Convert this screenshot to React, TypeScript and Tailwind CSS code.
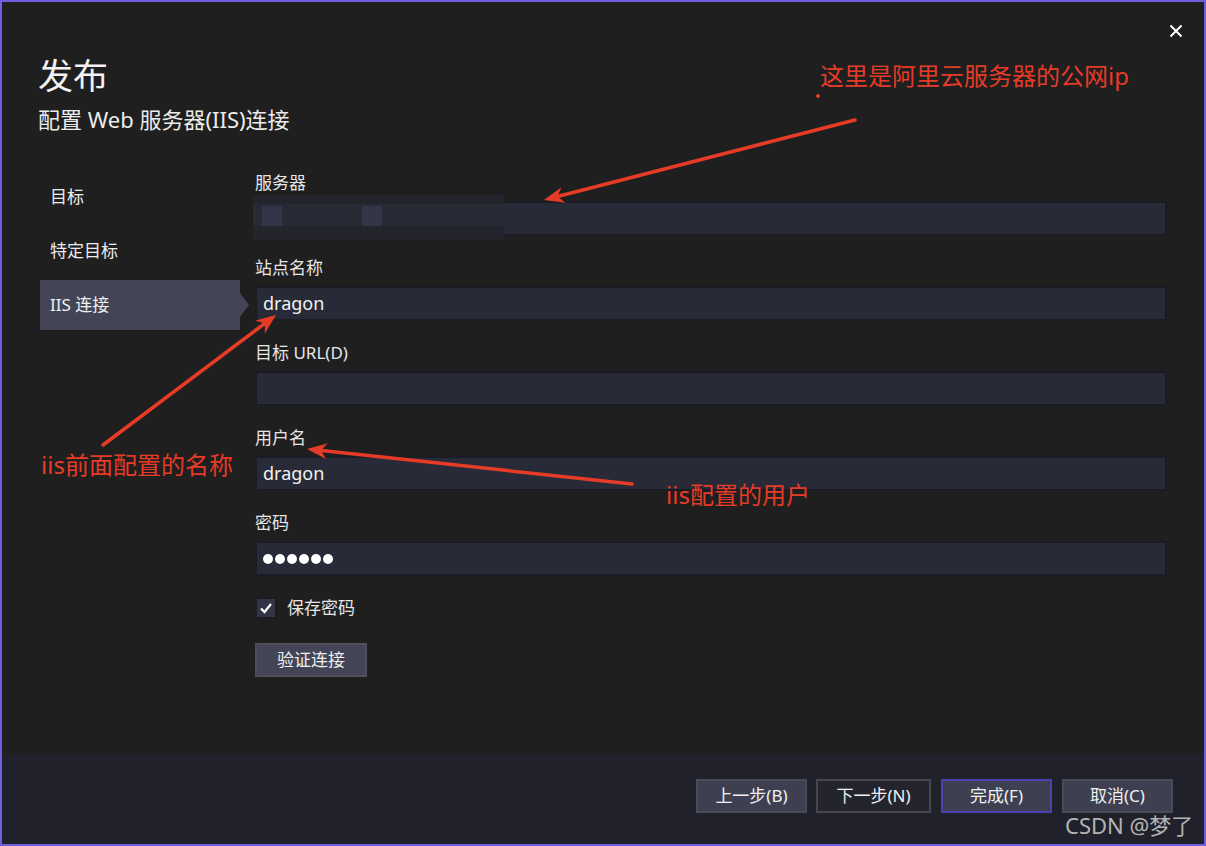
import React from "react";

const FONT = { fontFamily: '"Noto Sans", "Noto Sans CJK SC", sans-serif' };

function Arrow({ x1, y1, x2, y2 }: { x1: number; y1: number; x2: number; y2: number }) {
  const dx = x2 - x1;
  const dy = y2 - y1;
  const len = Math.hypot(dx, dy);
  const ux = dx / len;
  const uy = dy / len;
  const hl = 20;
  const hw = 8;
  const bx = x2 - ux * hl;
  const by = y2 - uy * hl;
  const px = -uy;
  const py = ux;
  const pts = `${x2},${y2} ${bx + px * hw},${by + py * hw} ${x2 - ux * hl * 0.7},${y2 - uy * hl * 0.7} ${bx - px * hw},${by - py * hw}`;
  return (
    <g>
      <line x1={x1} y1={y1} x2={x2 - ux * 10} y2={y2 - uy * 10} stroke="#e63b27" strokeWidth={3.5} strokeLinecap="round" />
      <polygon points={pts} fill="#e63b27" />
    </g>
  );
}

function Field({ label, value, children }: { label: string; value?: string; children?: React.ReactNode }) {
  return (
    <div className="flex flex-col">
      <div className="h-[24px] leading-[24px] text-[17px] text-[#e6e6e6]">{label}</div>
      <div className="relative mt-[6px] h-[35px] border-2 border-[#1b1c23] bg-[#282a37] flex items-center px-[6px] text-[18px] text-[#f2f2f2]">
        {value}
        {children}
      </div>
    </div>
  );
}

export default function App() {
  return (
    <div className="relative w-[1206px] h-[846px] overflow-hidden" style={FONT}>
      <div className="w-[1206px] h-[846px] border-2 border-[#6e5fe0] bg-[#1f1f1f] flex flex-col">
        <div className="flex-1 flex flex-col">
          <div className="pl-[36px] pt-[51px]">
            <div className="text-[35px] leading-[46px] text-[#f2f2f2]">发布</div>
            <div className="mt-[5px] text-[22px] leading-[30px] text-[#ececec]">配置 Web 服务器(IIS)连接</div>
          </div>
          <div className="flex mt-[37px] pl-[38px] pr-[37px]">
            <div className="w-[200px] flex flex-col gap-[4px] pt-[1px]">
              <div className="h-[50px] flex items-center pl-[10px] text-[17px] text-[#ececec]">目标</div>
              <div className="h-[50px] flex items-center pl-[10px] text-[17px] text-[#ececec]">特定目标</div>
              <div className="relative h-[50px] flex items-center pl-[10px] text-[17px] text-[#f2f2f2] bg-[#434556]">
                IIS 连接
                <div className="absolute right-[-9px] top-[13px] w-0 h-0 border-y-[12px] border-y-transparent border-l-[9px] border-l-[#434556]"></div>
              </div>
            </div>
            <div className="flex-1 ml-[15px] flex flex-col">
              <div className="flex flex-col gap-[20px]">
                <Field label="服务器">
                  <div className="absolute left-[-4px] top-[-8px] w-[251px] h-[45px] bg-[#24252c]">
                    <div className="absolute left-[0px] top-[9px] w-[251px] h-[22px] bg-[#282a36]"></div>
                    <div className="absolute left-[9px] top-[11px] w-[20px] h-[20px] bg-[#333546]"></div>
                    <div className="absolute left-[109px] top-[11px] w-[20px] h-[20px] bg-[#333546]"></div>
                  </div>
                </Field>
                <Field label="站点名称" value="dragon" />
                <Field label="目标 URL(D)" />
                <Field label="用户名" value="dragon" />
                <Field label="密码">
                  <div className="flex gap-[2px]">
                    <div className="w-[10px] h-[10px] rounded-full bg-white"></div>
                    <div className="w-[10px] h-[10px] rounded-full bg-white"></div>
                    <div className="w-[10px] h-[10px] rounded-full bg-white"></div>
                    <div className="w-[10px] h-[10px] rounded-full bg-white"></div>
                    <div className="w-[10px] h-[10px] rounded-full bg-white"></div>
                    <div className="w-[10px] h-[10px] rounded-full bg-white"></div>
                  </div>
                </Field>
              </div>
              <div className="flex items-center mt-[21px] h-[22px]">
                <div className="w-[22px] h-[22px] border-2 border-[#1b1c23] bg-[#323446] flex items-center justify-center">
                  <svg width="14" height="14" viewBox="0 0 14 14">
                    <path d="M2 7.5 L5.5 11 L12 3" fill="none" stroke="#ffffff" strokeWidth="2.2" />
                  </svg>
                </div>
                <span className="ml-[10px] text-[17px] text-[#e6e6e6]">保存密码</span>
              </div>
              <div className="mt-[24px]">
                <button className="w-[112px] h-[34px] border-2 border-[#4e4f5a] bg-[#434556] text-[17px] text-[#f0f0f0]">验证连接</button>
              </div>
            </div>
          </div>
        </div>
        <div className="h-[90px] bg-[#21212b] flex items-start justify-end pt-[25px] pr-[31px]">
          <button className="w-[111px] h-[34px] border-2 border-[#4a4b54] bg-[#3e4052] text-[17px] text-[#f0f0f0]">上一步(B)</button>
          <button className="w-[115px] h-[34px] border-2 border-[#45464e] bg-[#23242e] text-[17px] text-[#f0f0f0] ml-[9px]">下一步(N)</button>
          <button className="w-[111px] h-[34px] border-2 border-[#4e3fb0] bg-[#3e4052] text-[17px] text-[#f0f0f0] ml-[10px]">完成(F)</button>
          <button className="w-[111px] h-[34px] border-2 border-[#4a4b54] bg-[#3e4052] text-[17px] text-[#f0f0f0] ml-[10px]">取消(C)</button>
        </div>
      </div>

      {/* close button */}
      <div className="absolute left-[1166px] top-[21px] w-[20px] h-[20px] flex items-center justify-center">
        <svg width="14" height="14" viewBox="0 0 14 14">
          <path d="M1.5 1.5 L12.5 12.5 M12.5 1.5 L1.5 12.5" stroke="#ffffff" strokeWidth="2" />
        </svg>
      </div>

      {/* annotations */}
      <svg className="absolute left-0 top-0 pointer-events-none" width="1206" height="846" viewBox="0 0 1206 846">
        <Arrow x1={855} y1={120} x2={544} y2={200} />
        <Arrow x1={103} y1={445} x2={276} y2={315} />
        <Arrow x1={632} y1={484} x2={307} y2={449} />
        <circle cx={818} cy={96} r={2} fill="#e63b27" />
      </svg>
      <div className="absolute left-[820px] top-[60px] text-[24px] leading-[32px] text-[#e63b27] whitespace-nowrap">这里是阿里云服务器的公网ip</div>
      <div className="absolute left-[41px] top-[449px] text-[24px] leading-[32px] text-[#e63b27] whitespace-nowrap">iis前面配置的名称</div>
      <div className="absolute left-[666px] top-[479px] text-[24px] leading-[32px] text-[#e63b27] whitespace-nowrap">iis配置的用户</div>
      <div className="absolute left-[1065px] top-[809px] text-[22px] leading-[32px] text-[#b4b4b4] whitespace-nowrap">CSDN @梦了</div>
    </div>
  );
}
